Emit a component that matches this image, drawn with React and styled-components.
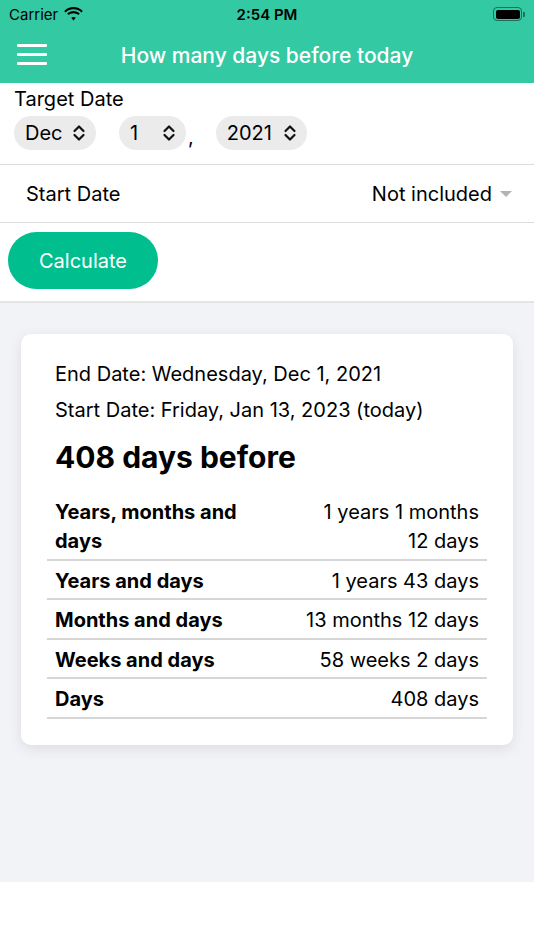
import React from "react";
import styled, { createGlobalStyle } from "styled-components";

const Global = createGlobalStyle`
  html, body { margin: 0; padding: 0; background: #fff; }
  body { font-family: Inter, "Noto Sans", "Liberation Sans", sans-serif; color: #000; }
  * { box-sizing: border-box; }
`;

const Screen = styled.div`
  width: 534px;
  height: 950px;
  display: flex;
  flex-direction: column;
  background: #fff;
`;

const Header = styled.div`
  background: #33c9a3;
  height: 83px;
  display: flex;
  flex-direction: column;
`;

const StatusBar = styled.div`
  height: 28px;
  display: grid;
  grid-template-columns: 1fr auto 1fr;
  align-items: center;
  padding: 0 9px;
  font-size: 15px;
  color: #000;
`;

const Carrier = styled.div`
  display: flex;
  align-items: center;
  gap: 6px;
`;

const Clock = styled.div`
  font-weight: 600;
`;

const Battery = styled.div`
  justify-self: end;
  display: flex;
  align-items: center;
`;

const BatteryBody = styled.div`
  width: 29px;
  height: 14px;
  border: 1.5px solid #1d6e5a;
  border-radius: 4px;
  padding: 1.5px;
  &::after {
    content: "";
    display: block;
    width: 100%;
    height: 100%;
    background: #000;
    border-radius: 2px;
  }
`;

const BatteryCap = styled.div`
  width: 2px;
  height: 5px;
  margin-left: 1px;
  background: #1d6e5a;
  border-radius: 0 1px 1px 0;
`;

const NavBar = styled.div`
  flex: 1;
  position: relative;
  display: flex;
  align-items: center;
  justify-content: center;
`;

const Hamburger = styled.div`
  position: absolute;
  left: 17px;
  top: 16px;
  width: 30px;
  display: flex;
  flex-direction: column;
  gap: 6px;
  span {
    display: block;
    height: 3px;
    background: #fff;
    border-radius: 1px;
  }
`;

const Title = styled.div`
  color: #fff;
  font-size: 21px;
  font-weight: 500;
`;

const TargetSection = styled.div`
  padding: 4px 14px 14px;
  border-bottom: 1px solid #dcdcdc;
`;

const Label = styled.div`
  font-size: 20px;
  line-height: 24px;
`;

const PickerRow = styled.div`
  display: flex;
  align-items: center;
  margin-top: 5px;
`;

const Picker = styled.div`
  display: flex;
  align-items: center;
  justify-content: space-between;
  height: 34px;
  width: ${(p) => p.w}px;
  margin-right: ${(p) => p.gap}px;
  padding: 0 10px 0 11px;
  background: #ebebeb;
  border-radius: 17px;
  font-size: 20px;
`;

const Comma = styled.span`
  font-size: 20px;
  margin: 8px 22px 0 2px;
`;

const OptionRow = styled.div`
  height: 58px;
  display: flex;
  align-items: center;
  justify-content: space-between;
  padding: 0 22px 0 26px;
  border-bottom: 1px solid #dcdcdc;
  font-size: 20px;
`;

const OptionValue = styled.div`
  display: flex;
  align-items: center;
  gap: 8px;
`;

const Caret = styled.span`
  width: 0;
  height: 0;
  border-left: 6.5px solid transparent;
  border-right: 6.5px solid transparent;
  border-top: 6px solid #b4b4b4;
  margin-top: 1px;
`;

const ButtonBar = styled.div`
  padding: 9px 8px 12px;
  border-bottom: 2px solid #e3e4e4;
`;

const Button = styled.button`
  width: 150px;
  height: 57px;
  border: none;
  border-radius: 29px;
  background: #00be8e;
  color: #fff;
  font-family: inherit;
  font-size: 20px;
`;

const Result = styled.div`
  background: #f2f3f7;
  height: 579px;
  padding: 31px 21px 0;
`;

const Card = styled.div`
  background: #fff;
  border-radius: 10px;
  box-shadow: 0 4px 14px rgba(0, 0, 0, 0.09);
  padding: 22px 26px 26px;
`;

const Line = styled.div`
  font-size: 20px;
  line-height: 36px;
  padding-left: 8px;
`;

const Big = styled.div`
  font-size: 30px;
  font-weight: 700;
  line-height: 40px;
  padding-left: 8px;
  margin-top: 9px;
  margin-bottom: 15px;
`;

const Table = styled.div`
  display: flex;
  flex-direction: column;
`;

const Row = styled.div`
  display: flex;
  justify-content: space-between;
  align-items: flex-start;
  padding: 6px 8px 2.5px;
  border-bottom: 2px solid #d6d6d6;
  font-size: 20px;
  line-height: 29px;
`;

const Key = styled.div`
  font-weight: 700;
  max-width: 200px;
`;

const Val = styled.div`
  text-align: right;
  max-width: 180px;
`;

function Wifi() {
  return (
    <svg width="19" height="14" viewBox="0 0 19 14">
      <path d="M9.5 2.2c3 0 5.8 1.2 7.9 3.2l1.4-1.5C16.3 1.5 13 0 9.5 0S2.7 1.5.2 3.9l1.4 1.5C3.7 3.4 6.5 2.2 9.5 2.2z" fill="#000" />
      <path d="M9.5 6.2c1.9 0 3.6.7 4.9 1.9l1.4-1.5C14.1 5 11.9 4 9.5 4S4.9 5 3.2 6.6l1.4 1.5c1.3-1.2 3-1.9 4.9-1.9z" fill="#000" />
      <path d="M9.5 9.9c-.9 0-1.7.3-2.3.9l2.3 2.6 2.3-2.6c-.6-.6-1.4-.9-2.3-.9z" fill="#000" />
    </svg>
  );
}

function UpDown() {
  return (
    <svg width="14" height="18" viewBox="0 0 14 18">
      <path d="M2.5 7 7 2.5 11.5 7M2.5 11 7 15.5 11.5 11" fill="none" stroke="#111" strokeWidth="2.2" strokeLinecap="round" strokeLinejoin="round" />
    </svg>
  );
}

const rows = [
  ["Years, months and days", "1 years 1 months 12 days"],
  ["Years and days", "1 years 43 days"],
  ["Months and days", "13 months 12 days"],
  ["Weeks and days", "58 weeks 2 days"],
  ["Days", "408 days"],
];

export default function App() {
  return (
    <Screen>
      <Global />
      <Header>
        <StatusBar>
          <Carrier>
            Carrier <Wifi />
          </Carrier>
          <Clock>2:54 PM</Clock>
          <Battery>
            <BatteryBody />
            <BatteryCap />
          </Battery>
        </StatusBar>
        <NavBar>
          <Hamburger>
            <span />
            <span />
            <span />
          </Hamburger>
          <Title>How many days before today</Title>
        </NavBar>
      </Header>

      <TargetSection>
        <Label>Target Date</Label>
        <PickerRow>
          <Picker w={82} gap={23}>
            Dec <UpDown />
          </Picker>
          <Picker w={67} gap={0}>
            1 <UpDown />
          </Picker>
          <Comma>,</Comma>
          <Picker w={91} gap={0}>
            2021 <UpDown />
          </Picker>
        </PickerRow>
      </TargetSection>

      <OptionRow>
        <span>Start Date</span>
        <OptionValue>
          Not included <Caret />
        </OptionValue>
      </OptionRow>

      <ButtonBar>
        <Button>Calculate</Button>
      </ButtonBar>

      <Result>
        <Card>
          <Line>End Date: Wednesday, Dec 1, 2021</Line>
          <Line>Start Date: Friday, Jan 13, 2023 (today)</Line>
          <Big>408 days before</Big>
          <Table>
            {rows.map(([k, v]) => (
              <Row key={k}>
                <Key>{k}</Key>
                <Val>{v}</Val>
              </Row>
            ))}
          </Table>
        </Card>
      </Result>
    </Screen>
  );
}
